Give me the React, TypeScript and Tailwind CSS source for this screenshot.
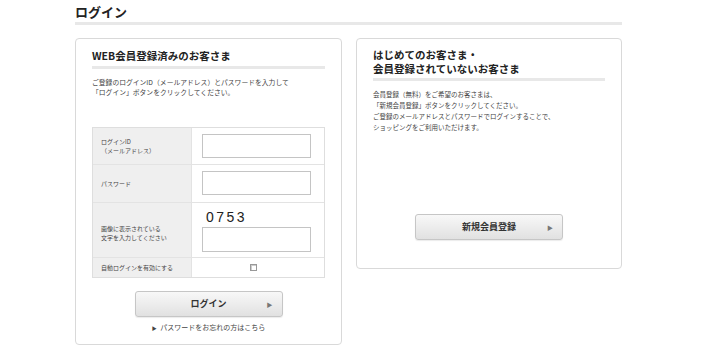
const font = { fontFamily: '"Noto Sans CJK JP", "Noto Sans", sans-serif' };

const GrayButton = ({ label }: { label: string }) => (
  <button className="relative flex h-[26px] w-[148px] items-center justify-center rounded-[3px] border border-[#c6c6c6] bg-gradient-to-b from-[#f8f8f8] to-[#e1e1e1] text-[9px] font-bold text-[#333] shadow-[0_1px_1px_rgba(0,0,0,0.08)]">
    {label}
    <span className="absolute right-[9px] top-1/2 -translate-y-1/2 text-[6px] text-[#777]">▶</span>
  </button>
);

const Heading = ({ children }: { children: React.ReactNode }) => (
  <>
    <h3 className="text-[10.5px] font-bold leading-[13.5px] text-[#222]">{children}</h3>
    <div className="mt-[3px] h-[3px] bg-[#e8e8e8]" />
  </>
);

const LoginCard = () => (
  <div className="rounded-[4px] border border-[#d9d9d9] bg-white px-[16px] pb-[11px] pt-[10px]">
    <Heading>WEB会員登録済みのお客さま</Heading>

    {/** description */}
    <p className="mt-[8px] text-[6.8px] leading-[10.5px] text-[#444]">
      ご登録のログインID（メールアドレス）とパスワードを入力して
      <br />
      「ログイン」ボタンをクリックしてください。
    </p>

    {/** form table */}
    <div className="mt-[29px] border border-[#dedede] text-[6px] leading-[9px] text-[#444]">
      <div className="flex h-[37px] border-b border-[#e3e3e3]">
        <div className="flex w-[99px] flex-col justify-center border-r border-[#e3e3e3] bg-[#efefef] pl-[8px]">
          <span>ログインID</span>
          <span>（メールアドレス）</span>
        </div>
        <div className="flex flex-1 items-center pl-[10px]">
          <input className="h-[24px] w-[109px] border border-[#c4c4c4] bg-white" />
        </div>
      </div>
      <div className="flex h-[38px] border-b border-[#e3e3e3]">
        <div className="flex w-[99px] items-center border-r border-[#e3e3e3] bg-[#efefef] pl-[8px]">
          パスワード
        </div>
        <div className="flex flex-1 items-center pl-[10px]">
          <input type="password" className="h-[24px] w-[109px] border border-[#c4c4c4] bg-white" />
        </div>
      </div>
      <div className="flex h-[55px] border-b border-[#e3e3e3]">
        <div className="flex w-[99px] flex-col justify-center border-r border-[#e3e3e3] bg-[#efefef] pl-[8px] pt-[6px]">
          <span>画像に表示されている</span>
          <span>文字を入力してください</span>
        </div>
        <div className="flex flex-1 flex-col pl-[10px] pt-[5px]">
          <span
            className="pl-[4px] text-[14px] leading-[18px] tracking-[2.5px] text-[#222]"
            style={{ fontFamily: '"Liberation Sans", Arial, sans-serif' }}
          >
            0753
          </span>
          <input className="mt-[1px] h-[25px] w-[109px] border border-[#c4c4c4] bg-white" />
        </div>
      </div>
      <div className="flex h-[19px]">
        <div className="flex w-[99px] items-center border-r border-[#e3e3e3] bg-[#efefef] pl-[8px]">
          自動ログインを有効にする
        </div>
        <div className="flex flex-1 items-center justify-center pr-[10px]">
          <span className="h-[7px] w-[7px] border border-[#999] bg-white shadow-[inset_1px_1px_0_#ccc]" />
        </div>
      </div>
    </div>

    {/** submit */}
    <div className="mt-[13px] flex justify-center">
      <GrayButton label="ログイン" />
    </div>
    <p className="mt-[5px] text-center text-[7px] leading-[10px] text-[#444]">
      <span className="mr-[2px] text-[5px]">▶</span> パスワードをお忘れの方はこちら
    </p>
  </div>
);

const RegisterCard = () => (
  <div className="self-start rounded-[4px] border border-[#d9d9d9] bg-white px-[16px] pb-[28px] pt-[9px]">
    <Heading>
      はじめてのお客さま・
      <br />
      会員登録されていないお客さま
    </Heading>

    {/** description */}
    <p className="mt-[8px] text-[6.5px] leading-[11px] text-[#444]">
      会員登録（無料）をご希望のお客さまは、
      <br />
      「新規会員登録」ボタンをクリックしてください。
      <br />
      ご登録のメールアドレスとパスワードでログインすることで、
      <br />
      ショッピングをご利用いただけます。
    </p>

    <div className="mt-[81px] flex justify-center">
      <GrayButton label="新規会員登録" />
    </div>
  </div>
);

export default function App() {
  return (
    <div className="h-[354px] w-[715px] bg-white" style={font}>
      <div className="ml-[75px] w-[547px] pt-[3px]">
        {/** page title */}
        <h2 className="text-[13px] font-bold leading-[18px] text-[#222]">ログイン</h2>
        <div className="mt-[1px] h-[3px] bg-[#e8e8e8]" />

        {/** cards */}
        <div className="mt-[13px] grid grid-cols-[267px_266px] gap-[14px]">
          <LoginCard />
          <RegisterCard />
        </div>
      </div>
    </div>
  );
}
